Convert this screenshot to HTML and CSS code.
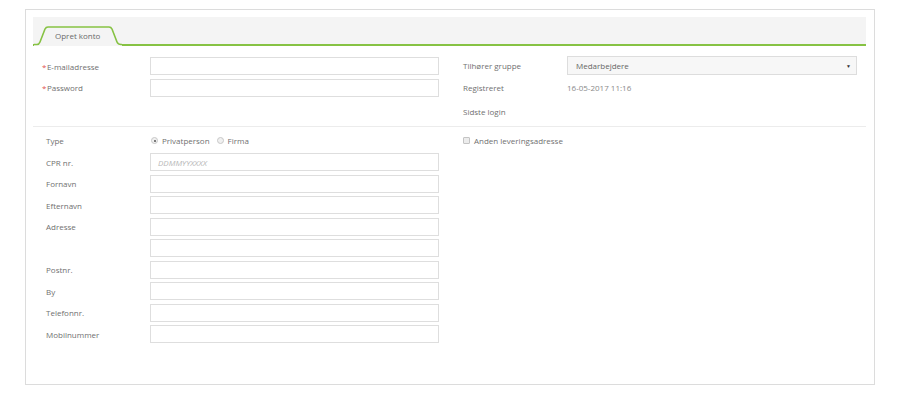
FILE: index.html
```html
<!DOCTYPE html>
<html lang="da">
<head>
<meta charset="utf-8">
<title>Opret konto</title>
<link rel="stylesheet" href="styles.css">
</head>
<body>
<div class="panel">
  <div class="band">
    <div class="tab">
      <svg class="tab-shape" width="88" height="20" viewBox="0 0 88 20">
        <path d="M0,18.5 L3,18.5 Q5,18.5 6,16 L11,3 Q12,1 14,1 L75,1 Q77,1 78,3 L83,16 Q84,18.5 87,18.5 L88,18.5 L88,20 L0,20 Z" fill="#f4f4f4" stroke="none"/>
        <path d="M0,18.5 L3,18.5 Q5,18.5 6,16 L11,3 Q12,1 14,1 L75,1 Q77,1 78,3 L83,16 Q84,18.5 87,18.5 L88,18.5" fill="none" stroke="#86c243" stroke-width="1.6"/>
      </svg>
      <span class="tab-label">Opret konto</span>
    </div>
  </div>

  <div class="grid top">
    <div class="col">
      <div class="row"><label class="lbl"><span class="req">*</span>E-mailadresse</label><div class="input"></div></div>
      <div class="row"><label class="lbl"><span class="req">*</span>Password</label><div class="input"></div></div>
    </div>
    <div class="col right">
      <div class="row sel-row"><label class="lbl">Tilhører gruppe</label><div class="select"><span>Medarbejdere</span><span class="arrow">▼</span></div></div>
      <div class="row"><label class="lbl">Registreret</label><span class="value">16-05-2017 11:16</span></div>
      <div class="row last"><label class="lbl">Sidste login</label><span class="value"></span></div>
    </div>
  </div>

  <div class="sep"></div>

  <div class="grid bottom">
    <div class="col">
      <div class="row"><label class="lbl">Type</label>
        <div class="radios">
          <span class="radio checked"></span><span class="opt">Privatperson</span>
          <span class="radio"></span><span class="opt">Firma</span>
        </div>
      </div>
      <div class="row"><label class="lbl">CPR nr.</label><div class="input"><span class="ph">DDMMYYXXXX</span></div></div>
      <div class="row"><label class="lbl">Fornavn</label><div class="input"></div></div>
      <div class="row"><label class="lbl">Efternavn</label><div class="input"></div></div>
      <div class="row"><label class="lbl">Adresse</label><div class="input"></div></div>
      <div class="row"><label class="lbl"></label><div class="input"></div></div>
      <div class="row"><label class="lbl">Postnr.</label><div class="input"></div></div>
      <div class="row"><label class="lbl">By</label><div class="input"></div></div>
      <div class="row"><label class="lbl">Telefonnr.</label><div class="input"></div></div>
      <div class="row"><label class="lbl">Mobilnummer</label><div class="input"></div></div>
    </div>
    <div class="col right">
      <div class="row"><div class="check"><span class="box"></span><span class="opt">Anden leveringsadresse</span></div></div>
    </div>
  </div>
</div>
</body>
</html>
```

FILE: styles.css
```css
html, body {
  margin: 0;
  padding: 0;
  background: #ffffff;
}
body {
  font-family: "Open Sans", "Liberation Sans", sans-serif;
  font-size: 8px;
  color: #666;
}
.panel {
  box-sizing: border-box;
  margin: 9px 0 0 25px;
  width: 850px;
  height: 376px;
  border: 1px solid #dcdcdc;
  padding: 7px 8px 0 7px;
}
.band {
  height: 27px;
  background: #f4f4f4;
  border-bottom: 2px solid #86c243;
  display: flex;
  align-items: flex-end;
  padding-left: 1px;
}
.tab {
  position: relative;
  width: 88px;
  height: 20px;
  margin-bottom: -2px;
}
.tab-shape {
  position: absolute;
  left: 0;
  top: 0;
  display: block;
}
.tab-label {
  position: absolute;
  left: 21px;
  top: 4px;
  font-size: 8px;
  color: #6a6a6a;
  line-height: 12px;
}
.grid {
  display: grid;
  grid-template-columns: 393px 394px;
  column-gap: 24px;
  padding-left: 13px;
}
.top {
  margin-top: 11px;
}
.col {
  display: flex;
  flex-direction: column;
  gap: 3.5px;
}
.row {
  display: flex;
  align-items: center;
  height: 18px;
}
.lbl {
  width: 104px;
  flex: none;
  color: #707070;
  white-space: nowrap;
}
.req {
  color: #e0534f;
  margin-left: -4px;
  margin-right: 0.5px;
}
.input {
  box-sizing: border-box;
  width: 289px;
  height: 18px;
  border: 1px solid #dedede;
  background: #fff;
  display: flex;
  align-items: center;
  padding-left: 7px;
}
.ph {
  color: #b8b8b8;
  font-style: italic;
}
.right {
  gap: 3px;
}
.sel-row {
  height: 19px;
  margin-top: -1px;
}
.select {
  box-sizing: border-box;
  width: 290px;
  height: 19px;
  border: 1px solid #dddddd;
  background: #f7f7f7;
  display: flex;
  align-items: center;
  justify-content: space-between;
  padding: 0 5px 0 8px;
  color: #666;
}
.arrow {
  font-size: 5px;
  color: #333;
}
.value {
  color: #8a8a8a;
}
.last {
  margin-top: 3px;
}
.sep {
  height: 1px;
  background: #ececec;
  margin-top: 6px;
}
.bottom {
  margin-top: 4.5px;
}
.radios, .check {
  display: flex;
  align-items: center;
}
.radio {
  box-sizing: border-box;
  width: 7px;
  height: 7px;
  border-radius: 50%;
  border: 1px solid #c8c8c8;
  background: #f0f0f0;
  margin: 0 4px 0 1px;
  position: relative;
}
.radio.checked::after {
  content: "";
  position: absolute;
  left: 1.5px;
  top: 1.5px;
  width: 2px;
  height: 2px;
  border-radius: 50%;
  background: #555;
}
.opt {
  color: #707070;
  margin-right: 6px;
}
.box {
  box-sizing: border-box;
  width: 7px;
  height: 7px;
  border: 1px solid #c4c4c4;
  border-radius: 1px;
  background: #ececec;
  margin-right: 4px;
}
```
